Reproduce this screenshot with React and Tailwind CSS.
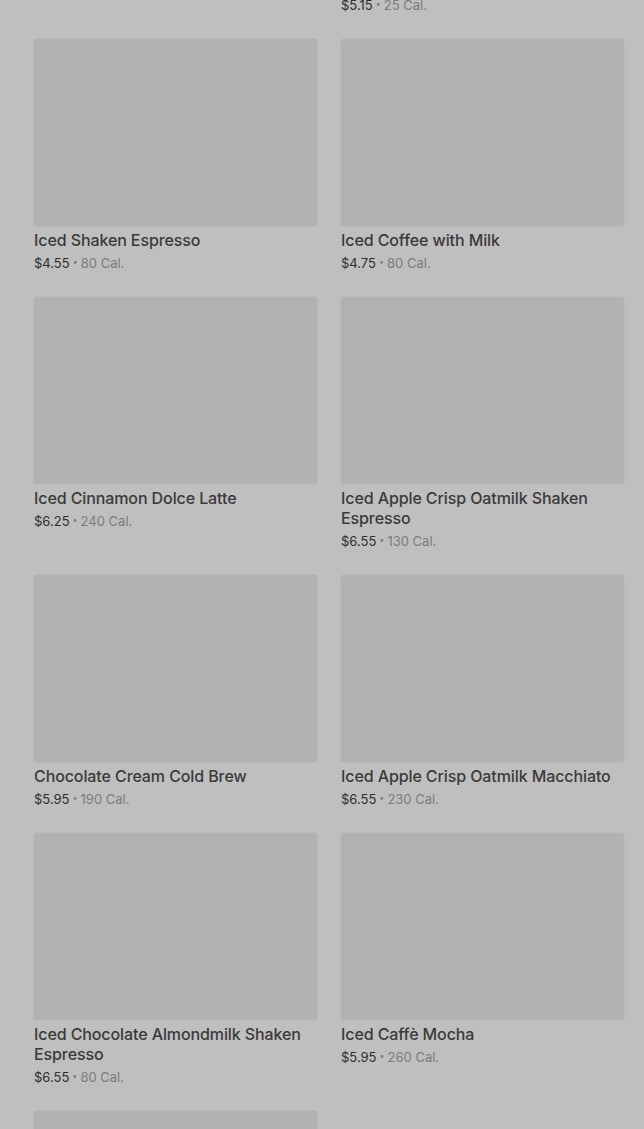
const items = [
  { name: 'Iced Shaken Espresso', price: '$4.55', cal: '80 Cal.' },
  { name: 'Iced Coffee with Milk', price: '$4.75', cal: '80 Cal.' },
  { name: 'Iced Cinnamon Dolce Latte', price: '$6.25', cal: '240 Cal.' },
  { name: 'Iced Apple Crisp Oatmilk Shaken Espresso', price: '$6.55', cal: '130 Cal.' },
  { name: 'Chocolate Cream Cold Brew', price: '$5.95', cal: '190 Cal.' },
  { name: 'Iced Apple Crisp Oatmilk Macchiato', price: '$6.55', cal: '230 Cal.' },
  { name: 'Iced Chocolate Almondmilk Shaken Espresso', price: '$6.55', cal: '80 Cal.' },
  { name: 'Iced Caffè Mocha', price: '$5.95', cal: '260 Cal.' },
]

function Price({ price, cal }) {
  return (
    <p className="mt-[3px] h-5 text-[13px] leading-5 text-[#2e2e2e]">
      {price}
      <span className="relative -top-[3px] mx-[3px] inline-block align-middle text-[9px] leading-none text-[#7c7c7c]">•</span>
      <span className="text-[#7c7c7c]">{cal}</span>
    </p>
  )
}

function Card({ name, price, cal }) {
  return (
    <div>
      <div className="h-[187px] rounded-[3px] bg-[#b2b2b2] shadow-[0_0_0_1px_#bababa]" />
      <h3 className="mt-1 text-[16px] leading-5 font-medium text-[#3a3a3a] tracking-[-0.1px]">{name}</h3>
      <Price price={price} cal={cal} />
    </div>
  )
}

export default function App() {
  return (
    <div
      className="h-[1129px] overflow-hidden bg-[#bfbfbf] pl-[34px] pr-[20px]"
      style={{ fontFamily: 'Inter, Roboto, "Liberation Sans", sans-serif' }}
    >
      <div className="grid grid-cols-2 gap-x-6 -mt-[8px]">
        <div />
        <Price price="$5.15" cal="25 Cal." />
      </div>
      <div className="mt-6 grid grid-cols-2 gap-x-6 gap-y-6">
        {items.map((it) => (
          <Card key={it.name} {...it} />
        ))}
        <div className="h-[187px] rounded-[3px] bg-[#b2b2b2] shadow-[0_0_0_1px_#bababa]" />
      </div>
    </div>
  )
}
